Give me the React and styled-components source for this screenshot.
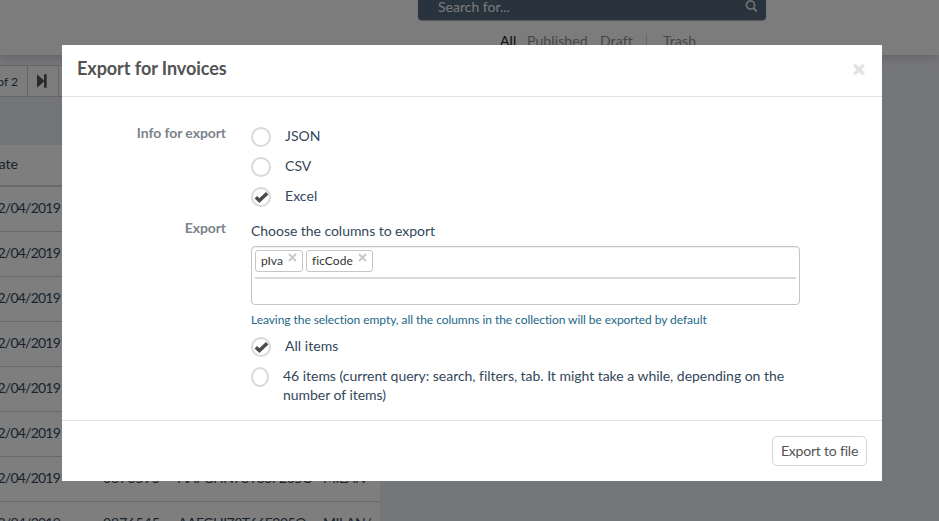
import React from "react";
import styled, { createGlobalStyle } from "styled-components";

const Global = createGlobalStyle`
  *, *::before, *::after { box-sizing: border-box; }
  body {
    margin: 0;
    overflow: hidden;
    font-family: Lato, sans-serif;
    font-size: 14px;
    font-variant-ligatures: none;
    color: #33475a;
  }
`;

const Page = styled.div`
  position: relative;
  display: flex;
  flex-direction: column;
  height: 521px;
  overflow: hidden;
  background: #ebecef;
`;

const Header = styled.header`
  flex: none;
  height: 55px;
  padding-left: 418px;
  background: #f8f8f8;
  box-shadow: 0 1px 9px rgba(60, 64, 70, 0.25);
  clip-path: inset(0 0 -12px 0);
`;

const SearchBar = styled.div`
  display: flex;
  align-items: center;
  justify-content: space-between;
  width: 348px;
  height: 20px;
  padding: 0 8px 7px 20px;
  border-radius: 0 0 4px 4px;
  background: #50667a;
  color: #f2f4f6;
  box-shadow: 0 1px 1px rgba(0, 0, 0, 0.3);
  line-height: 13px;
`;

const Filters = styled.nav`
  display: flex;
  align-items: center;
  height: 17px;
  margin: 12px 0 0 82px;
`;

const Filter = styled.span`
  width: ${(p) => p.$width}px;
  color: ${(p) => (p.$active ? "#222" : "#8a8d94")};
  letter-spacing: 0.1px;
  line-height: 17px;
  white-space: nowrap;
`;

const Divider = styled.i`
  width: 17px;
  height: 12px;
  border-left: 1px solid #c4c4c8;
`;

const Listing = styled.main`
  flex: none;
  width: 380px;
  margin-top: 10px;
`;

const Pager = styled.div`
  display: flex;
  height: 32px;
  border: solid #cdcdd0;
  border-width: 1px 0;
  background: #f8f8f8;
`;

const PagerCell = styled.div`
  display: flex;
  align-items: center;
  justify-content: ${(p) => (p.$end ? "flex-end" : "center")};
  width: ${(p) => p.$width}px;
  padding-right: ${(p) => (p.$end ? 9 : 0)}px;
  border-right: 1px solid #cdcdd0;
  font-size: 12px;
  white-space: nowrap;
`;

const Band = styled.div`
  height: 48px;
  background: #e6e8ed;
`;

const TableRow = styled.div`
  display: grid;
  grid-template-columns: 61px 42px 75px 145px 1fr;
  align-items: center;
  height: ${(p) => (p.$head ? 42 : 45)}px;
  border-bottom: ${(p) => (p.$head ? 2 : 1)}px solid #d2d2d4;
  padding-bottom: ${(p) => (p.$head ? 3 : 4)}px;
  background: #fcfcfc;
  white-space: nowrap;
`;

const Cell = styled.span`
  display: flex;
  justify-content: ${(p) => (p.$end ? "flex-end" : "flex-start")};
  padding-right: ${(p) => p.$pad || 0}px;
  letter-spacing: ${(p) => p.$spacing || 0}px;
`;

const Overlay = styled.div`
  position: absolute;
  inset: 0;
  padding: 45px 57px 40px 62px;
  background: rgba(0, 0, 0, 0.5);
`;

const Modal = styled.section`
  display: flex;
  flex-direction: column;
  width: 820px;
  height: 436px;
  background: #fff;
`;

const ModalHeader = styled.div`
  display: flex;
  align-items: center;
  justify-content: space-between;
  height: 52px;
  padding: 0 17px 3px 15px;
  border-bottom: 1px solid #dfdfdf;
`;

const Title = styled.h2`
  margin: -2px 0 0;
  font-size: 18px;
  font-weight: 700;
  color: #535353;
  line-height: 22px;
  letter-spacing: -0.05px;
`;

const ModalBody = styled.div`
  display: grid;
  grid-template-columns: 164px 549px;
  grid-template-rows: 95px 1fr;
  column-gap: 25px;
  flex: 1;
  padding-top: 27px;
`;

const Label = styled.div`
  text-align: right;
  font-weight: 700;
  color: #7c838c;
  line-height: 18px;
  letter-spacing: -0.08px;
`;

const Options = styled.div`
  display: flex;
  flex-direction: column;
  gap: 10px;
  padding-top: ${(p) => p.$top}px;
`;

const Option = styled.div`
  display: flex;
  gap: 14px;
  min-height: 20px;
  line-height: 19px;
  letter-spacing: ${(p) => (p.$wrap ? -0.03 : 0.05)}px;
`;

const OptionText = styled.span`
  margin-top: -1px;
`;

const Radio = styled.span`
  display: grid;
  place-items: center;
  flex: none;
  width: ${(p) => (p.$narrow ? 18 : 20)}px;
  height: 20px;
  border: 2px solid #d9d9d9;
  border-radius: 50%;
  background: #fff;
`;

const Field = styled.div`
  padding-top: 2px;
`;

const Prompt = styled.div`
  height: 25px;
  line-height: 19px;
  letter-spacing: -0.04px;
`;

const TagBox = styled.div`
  height: 59px;
  padding: 3px;
  border: 1px solid #c3c5c7;
  border-radius: 4px;
  box-shadow: inset 0 1px 1px rgba(0, 0, 0, 0.07);
`;

const Tags = styled.div`
  display: flex;
  gap: 3px;
  height: 29px;
  border-bottom: 2px solid #d9d9d9;
`;

const Tag = styled.span`
  display: flex;
  width: ${(p) => p.$width}px;
  height: 22px;
  justify-content: space-between;
  padding: 2px 5px 0;
  border: 1px solid #c6c6c6;
  border-radius: 3px;
  font-size: 12px;
  line-height: 16px;
  color: #333;
  letter-spacing: 0.05px;
`;

const Hint = styled.div`
  height: 18px;
  margin-top: 6px;
  font-size: 12px;
  line-height: 17px;
  color: #226787;
  white-space: nowrap;
  letter-spacing: -0.06px;
`;

const ModalFooter = styled.div`
  display: flex;
  justify-content: flex-end;
  align-items: flex-start;
  height: 61px;
  padding: 15px 15px 0;
  border-top: 1px solid #dfdfdf;
`;

const ExportButton = styled.button`
  width: 95px;
  height: 30px;
  padding: 0 0 2px;
  border: 1px solid #d4d5d7;
  border-radius: 5px;
  background: #fff;
  color: #535353;
  font: 14px Lato, sans-serif;
  letter-spacing: -0.2px;
`;

const Check = () => (
  <svg width="15" height="12" viewBox="0 0 15 12">
    <path d="M1.8 6.2 5.4 9.6 13.2 2.2" fill="none" stroke="#4c4c4c" strokeWidth="3.5" />
  </svg>
);

const TagClose = () => (
  <svg width="9" height="9" viewBox="0 0 9 9">
    <path d="M1 1 8 8M8 1 1 8" fill="none" stroke="#c8c8c8" strokeWidth="1.9" />
  </svg>
);

const ModalClose = () => (
  <svg width="12" height="12" viewBox="0 0 12 12">
    <path d="M2.5 3 9.5 10M9.5 3 2.5 10" fill="none" stroke="#e1e3e4" strokeWidth="3.6" strokeLinecap="square" />
  </svg>
);

const SearchIcon = () => (
  <svg width="13" height="13" viewBox="0 0 13 13">
    <circle cx="5.5" cy="5" r="4.1" fill="none" stroke="#d8dadd" strokeWidth="1.8" />
    <path d="M8.4 8 11.8 11.4" stroke="#d8dadd" strokeWidth="2.1" />
  </svg>
);

const LastPage = () => (
  <svg width="12" height="14" viewBox="0 0 12 14">
    <path d="M0 .3 7 6.5V.3H9.7V13.7H7V7.5L0 13.7Z" fill="#555" />
  </svg>
);

const Choice = ({ label, checked, wrap }) => (
  <Option $wrap={wrap}>
    <Radio $narrow={wrap}>{checked && <Check />}</Radio>
    <OptionText>{label}</OptionText>
  </Option>
);

const ROWS = [
  ["", "", ""],
  ["", "", ""],
  ["", "", ""],
  ["", "", ""],
  ["", "", ""],
  ["", "", ""],
  ["0876595", "AAFGHN78T66F205O", "MILAN"],
  ["0876545", "AAFGHI78T66F205O", "MILAN/"],
];

export default function App() {
  return (
    <Page>
      <Global />
      <Header>
        <SearchBar>
          Search for...
          <SearchIcon />
        </SearchBar>
        <Filters>
          <Filter $width={27} $active>All</Filter>
          <Filter $width={73}>Published</Filter>
          <Filter $width={46}>Draft</Filter>
          <Divider />
          <Filter $width={40}>Trash</Filter>
        </Filters>
      </Header>
      <Listing>
        <Pager>
          <PagerCell $width={28} $end>of 2</PagerCell>
          <PagerCell $width={31}><LastPage /></PagerCell>
        </Pager>
        <Band />
        <TableRow $head>
          <Cell $end $pad={43}>ate</Cell>
        </TableRow>
        {ROWS.map(([code, fiscal, city], i) => (
          <TableRow key={i}>
            <Cell $end $pad={1} $spacing={-0.78}>2/04/2019</Cell>
            <span />
            <Cell>{code}</Cell>
            <Cell $spacing={-0.5}>{fiscal}</Cell>
            <Cell $spacing={-0.4}>{city}</Cell>
          </TableRow>
        ))}
      </Listing>
      <Overlay>
        <Modal>
          <ModalHeader>
            <Title>Export for Invoices</Title>
            <ModalClose />
          </ModalHeader>
          <ModalBody>
            <Label>Info for export</Label>
            <Options $top={3}>
              <Choice label="JSON" />
              <Choice label="CSV" />
              <Choice label="Excel" checked />
            </Options>
            <Label>Export</Label>
            <Field>
              <Prompt>Choose the columns to export</Prompt>
              <TagBox>
                <Tags>
                  <Tag $width={48}>pIva<TagClose /></Tag>
                  <Tag $width={67}>ficCode<TagClose /></Tag>
                </Tags>
              </TagBox>
              <Hint>Leaving the selection empty, all the columns in the collection will be exported by default</Hint>
              <Options $top={8}>
                <Choice label="All items" checked />
                <Choice
                  wrap
                  label="46 items (current query: search, filters, tab. It might take a while, depending on the number of items)"
                />
              </Options>
            </Field>
          </ModalBody>
          <ModalFooter>
            <ExportButton>Export to file</ExportButton>
          </ModalFooter>
        </Modal>
      </Overlay>
    </Page>
  );
}
